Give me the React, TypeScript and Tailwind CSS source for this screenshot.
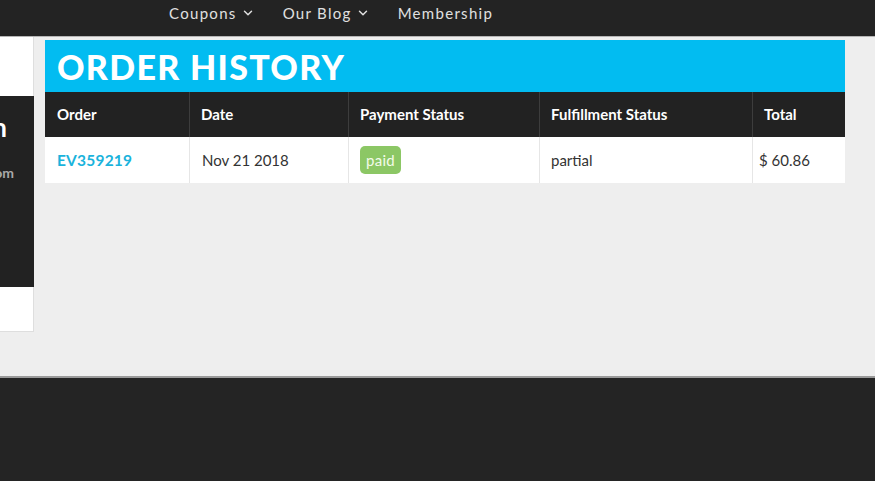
import { ChevronDown } from "lucide-react";

const font = { fontFamily: "Lato, 'Noto Sans', sans-serif" };

function NavItem({ label, menu }: { label: string; menu?: boolean }) {
  return (
    <a className="flex items-center gap-1 text-[15px] tracking-[1.3px] text-[#e0e0e0]">
      {label}
      {menu && <ChevronDown className="h-3.5 w-3.5" strokeWidth={2.5} />}
    </a>
  );
}

const columns = [
  { label: "Order", width: "w-[144px]" },
  { label: "Date", width: "w-[159px]" },
  { label: "Payment Status", width: "w-[191px]" },
  { label: "Fulfillment Status", width: "w-[213px]" },
  { label: "Total", width: "flex-1" },
];

export default function App() {
  return (
    <div className="flex h-[481px] w-[875px] flex-col overflow-hidden bg-[#232323]" style={font}>
      {/* top nav */}
      <header className="flex h-[37px] shrink-0 items-center gap-[28px] border-b border-[#b5b5b5] pb-[10px] pl-[169px]">
        <NavItem label="Coupons" menu />
        <NavItem label="Our Blog" menu />
        <NavItem label="Membership" />
      </header>

      <main className="flex h-[341px] shrink-0 gap-[11px] border-b-2 border-[#9a9a9a] bg-[#eeeeee]">
        {/* account sidebar, cut off on the left */}
        <aside className="flex w-[34px] shrink-0 flex-col">
          <div className="h-[59px] border-r border-[#dedede] bg-white" />
          <div className="flex h-[191px] flex-col items-end overflow-hidden bg-[#222] pr-[27px] pt-[12px]">
            <p className="shrink-0 whitespace-nowrap text-[26px] font-bold text-white">Hi, John</p>
            <p className="mt-[15px] shrink-0 translate-x-[7px] whitespace-nowrap text-[14px] font-bold text-[#a9a9a9]">
              john@mail.com
            </p>
          </div>
          <div className="h-[45px] border-r border-b border-[#dedede] bg-white" />
        </aside>

        {/* order history card */}
        <section className="mt-[3px] flex w-[800px] flex-col self-start">
          <h1 className="flex h-[52px] items-center bg-[#02bcf1] pl-[12px] pt-[1px] text-[34px] font-black tracking-[1.3px] text-white">
            ORDER HISTORY
          </h1>
          <div className="flex h-[45px] bg-[#222]">
            {columns.map((c, i) => (
              <div
                key={c.label}
                className={`${c.width} flex items-center px-[11px] text-[15px] font-bold text-white ${
                  i > 0 ? "border-l border-[#3d3d3d]" : "pl-[12px]"
                }`}
              >
                {c.label}
              </div>
            ))}
          </div>
          <div className="flex h-[46px] bg-white text-[15px] text-[#333]">
            <div className="flex w-[144px] items-center pl-[12px] pt-[1px] text-[15.5px] font-bold tracking-[0.2px] text-[#1ab3dc]">
              EV359219
            </div>
            <div className="flex w-[159px] items-center border-l border-[#e6e6e6] pl-[12px]">Nov 21 2018</div>
            <div className="flex w-[191px] items-center border-l border-[#e6e6e6] pl-[11px]">
              <span className="rounded-[5px] bg-[#8cc765] px-[6px] py-[3px] text-[15px] tracking-[0.3px] text-[#f3fbe9]">
                paid
              </span>
            </div>
            <div className="flex w-[213px] items-center border-l border-[#e6e6e6] pl-[11px]">partial</div>
            <div className="flex flex-1 items-center border-l border-[#e6e6e6] pl-[6px]">$ 60.86</div>
          </div>
        </section>
      </main>

      <footer className="flex-1 bg-[#242424]" />
    </div>
  );
}
